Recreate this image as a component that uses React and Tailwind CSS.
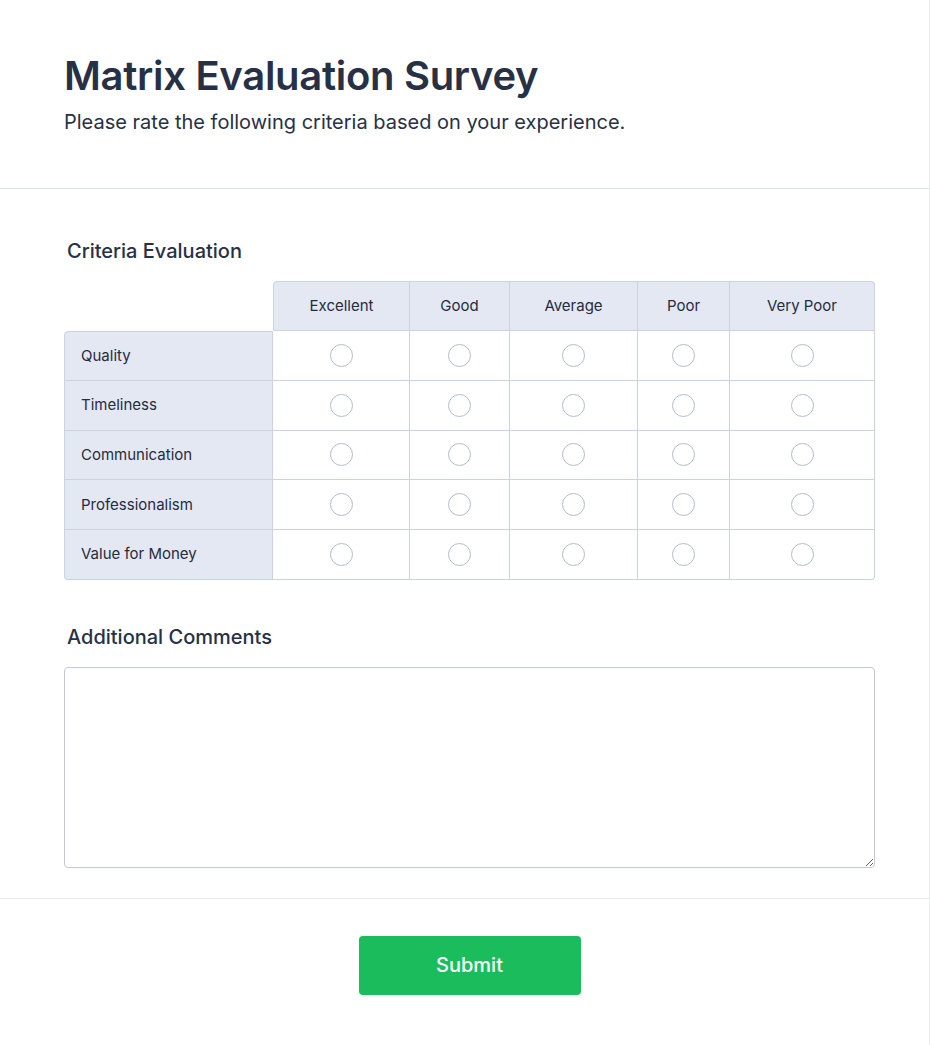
import React from "react";

const cols = ["Excellent", "Good", "Average", "Poor", "Very Poor"];
const widths = ["w-[137px]", "w-[100px]", "w-[128px]", "w-[92px]", "w-[145px]"];
const rows = ["Quality", "Timeliness", "Communication", "Professionalism", "Value for Money"];

function Radio() {
  return <span className="block w-[23px] h-[23px] rounded-full border border-[#b3bbcc] bg-white" />;
}

export default function App() {
  return (
    <div className="min-h-[1045px] w-full bg-white border-r border-[#e8ebf1] text-[#283045]" style={{ fontFamily: "Inter, 'Noto Sans', sans-serif" }}>
      <div className="pl-16 pr-[54px] pt-[54px] pb-[52px] border-b border-[#dfe3ec]">
        <h1 className="text-[40px] leading-[44px] font-semibold tracking-[-0.3px] text-[#283045]">Matrix Evaluation Survey</h1>
        <p className="mt-[10px] text-xl leading-7 text-[#283045]">Please rate the following criteria based on your experience.</p>
      </div>

      <div className="pl-16 pr-[54px] pt-[48px] pb-[30px] border-b border-[#e6e9f0]">
        <h2 className="pl-[3px] text-xl leading-7 font-medium text-[#283045]">Criteria Evaluation</h2>
        <div className="mt-[16px] flex flex-col text-[15px]">
          <div className="flex h-[50px]">
            <div className="w-[209px]" />
            {cols.map((c, i) => (
              <div
                key={c}
                className={
                  widths[i] +
                  " flex items-center justify-center bg-[#e4e8f3] border-t border-r border-b border-[#cbd2e0] text-[#262c40] " +
                  (i === 0 ? "border-l rounded-tl-[4px] " : "") +
                  (i === cols.length - 1 ? "rounded-tr-[4px]" : "")
                }
              >
                {c}
              </div>
            ))}
          </div>
          {rows.map((r, ri) => (
            <div key={r} className="flex h-[49.8px]">
              <div
                className={
                  "w-[209px] flex items-center pl-4 bg-[#e4e8f3] border-l border-r border-b border-[#cbd2e0] text-[#262c40] " +
                  (ri === 0 ? "border-t rounded-tl-[4px] " : "") +
                  (ri === rows.length - 1 ? "rounded-bl-[4px]" : "")
                }
              >
                {r}
              </div>
              {cols.map((c, i) => (
                <div
                  key={c}
                  className={
                    widths[i] +
                    " flex items-center justify-center bg-white border-r border-b border-[#cbd2e0] " +
                    (ri === rows.length - 1 && i === cols.length - 1 ? "rounded-br-[4px]" : "")
                  }
                >
                  <Radio />
                </div>
              ))}
            </div>
          ))}
        </div>

        <h2 className="mt-[43px] pl-[3px] text-xl leading-7 font-medium text-[#283045]">Additional Comments</h2>
        <textarea className="mt-[16px] block w-full h-[201px] rounded-[4px] border border-[#c3c9d6] bg-white p-3 outline-none resize-y" />
      </div>

      <div className="pl-16 pr-[54px] flex justify-center pt-[37px] pb-[50px]">
        <button className="w-[222px] h-[59px] rounded-[4px] bg-[#1bbc5c] text-white text-xl font-medium">Submit</button>
      </div>
    </div>
  );
}
